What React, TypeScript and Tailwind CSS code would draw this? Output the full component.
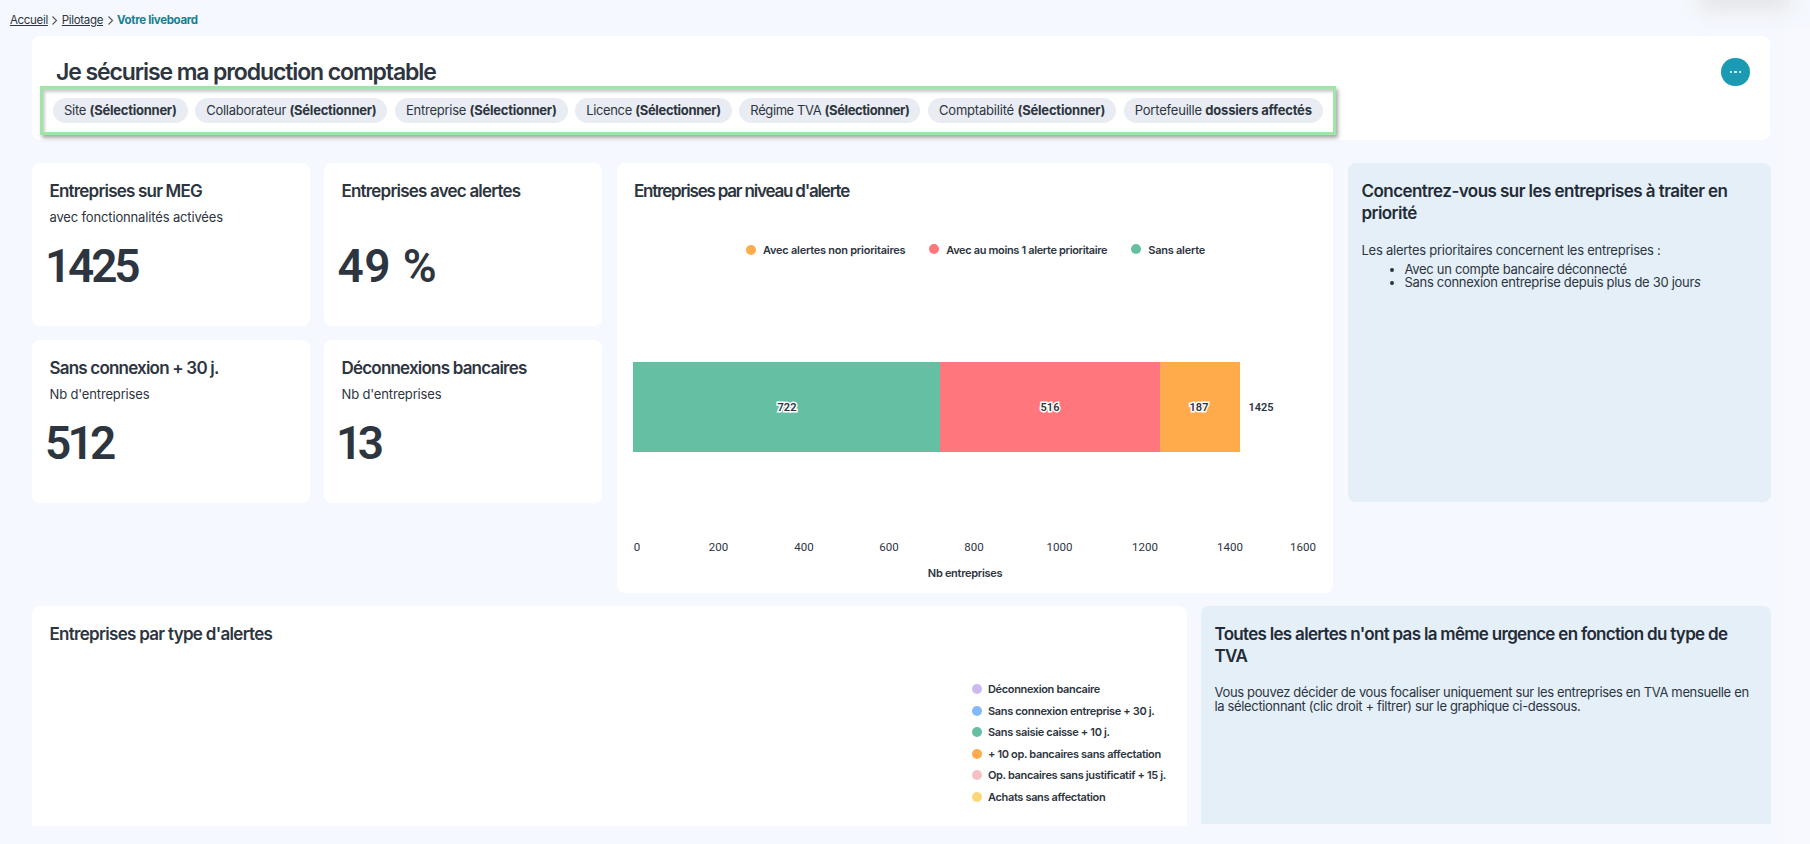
const sans = "font-['Inter','Noto_Sans',sans-serif]";

const chips: [string, string, string][] = [
  ["Site", "(Sélectionner)", "tracking-[-0.25px]"],
  ["Collaborateur", "(Sélectionner)", "tracking-[-0.25px]"],
  ["Entreprise", "(Sélectionner)", "tracking-[-0.25px]"],
  ["Licence", "(Sélectionner)", "tracking-[-0.35px]"],
  ["Régime TVA", "(Sélectionner)", "tracking-[-0.4px]"],
  ["Comptabilité", "(Sélectionner)", "tracking-[-0.2px]"],
  ["Portefeuille", "dossiers affectés", "tracking-[-0.2px]"],
];

function Kpi({ title, sub, value, numClass }: { title: string; sub?: string; value: string; numClass: string }) {
  return (
    <div className="h-[163px] w-[278px] rounded-lg bg-white pl-[17.5px] pt-[16px]">
      <div className="h-[24px] text-[17px] leading-[24px] font-semibold tracking-[-0.8px] text-[#2d3540]">{title}</div>
      <div className="mt-[4px] h-[20px] text-[13px] leading-[20px] tracking-[-0.15px] text-[#2d3540]">{sub}</div>
      <div className={`mt-[11px] font-['Roboto',sans-serif] text-[46px] leading-[56px] font-semibold text-[#2d3540] ${numClass}`}>{value}</div>
    </div>
  );
}

function Dot({ c }: { c: string }) {
  return <span className={`inline-block h-[10px] w-[10px] rounded-full ${c}`} />;
}

const axis: [string, number][] = [
  ["0", 4],
  ["200", 85.5],
  ["400", 171],
  ["600", 256],
  ["800", 341],
  ["1000", 426.5],
  ["1200", 512],
  ["1400", 597],
  ["1600", 670],
];

function BarChart() {
  return (
    <svg width="700" height="335" className="block">
      <rect x="0" y="104" width="307" height="90" fill="#65bfa3" />
      <rect x="307" y="104" width="220" height="90" fill="#ff777d" />
      <rect x="527" y="104" width="80" height="90" fill="#ffab4c" />
      <g className="font-['Roboto',sans-serif] text-[11px] font-semibold" textAnchor="middle" fill="#2d3540">
        {[
          ["722", 154],
          ["516", 417],
          ["187", 566],
        ].map(([t, x]) => (
          <text key={t} x={x} y="153" stroke="#ffffff" strokeWidth="3" className="[paint-order:stroke]">
            {t}
          </text>
        ))}
        <text x="628" y="153">1425</text>
      </g>
      <g className="font-['Roboto',sans-serif] text-[11.5px]" textAnchor="middle" fill="#2d3540">
        {axis.map(([t, x]) => (
          <text key={t} x={x} y="293">
            {t}
          </text>
        ))}
      </g>
      <text x="332" y="319" textAnchor="middle" fill="#2d3540" className="text-[11px] font-semibold tracking-[-0.3px]">
        Nb entreprises
      </text>
    </svg>
  );
}

const legend2: [string, string][] = [
  ["bg-[#cdb9f2]", "Déconnexion bancaire"],
  ["bg-[#85b7fb]", "Sans connexion entreprise + 30 j."],
  ["bg-[#65bfa3]", "Sans saisie caisse + 10 j."],
  ["bg-[#ffab4c]", "+ 10 op. bancaires sans affectation"],
  ["bg-[#f7c1c4]", "Op. bancaires sans justificatif + 15 j."],
  ["bg-[#fdd678]", "Achats sans affectation"],
];

function Chevron() {
  return (
    <span className="text-[#555]">
      <svg width="9" height="16" viewBox="0 0 9 16" fill="none" stroke="currentColor" strokeWidth="1.1">
        <path d="M2.5 4.5 6.5 8.5 2.5 12.5" />
      </svg>
    </span>
  );
}

export default function App() {
  return (
    <div className={`relative h-[844px] w-[1810px] overflow-hidden bg-[#f5f8fe] ${sans} text-[#2d3540]`}>
      <div className="absolute top-[-14px] left-[1700px] h-[24px] w-[90px] bg-[#e4e4e6] blur-[10px]" />
      <div className="absolute top-[29px] left-[1783px] h-[815px] w-[27px] bg-[#f8f9fe]" />

      <div className="relative flex h-[36px] items-start gap-[2.5px] pl-[10px] pt-[12px] text-[11.5px] leading-[16px] tracking-[-0.33px]">
        <span className="underline">Accueil</span>
        <Chevron />
        <span className="underline">Pilotage</span>
        <Chevron />
        <span className="font-bold text-[#13808f]">Votre liveboard</span>
      </div>

      <div className="relative ml-[32px] w-[1739px]">
        <div className="relative h-[104px] w-[1738px] rounded-lg bg-white pl-[8px] pt-[23px]">
          <h1 className="ml-[16px] h-[27px] text-[23px] leading-[27px] font-semibold tracking-[-1.1px] text-[#2d3540]">
            Je sécurise ma production comptable
          </h1>
          <div className="flex h-[49px] w-[1296px] items-center gap-[7.6px] border-[3px] border-[#9ce6a6] pl-[10px] shadow-[2px_3px_4px_rgba(0,0,0,0.35),inset_2px_3px_3px_rgba(0,0,0,0.2)]">
            {chips.map(([a, b, t]) => (
              <span key={a} className={`flex h-[25px] items-center rounded-full bg-[#e9ecf2] px-[11px] text-[13px] whitespace-nowrap text-[#2d3540] ${t}`}>
                {a}&nbsp;<b className="font-bold">{b}</b>
              </span>
            ))}
          </div>
          <button className="absolute top-[22px] right-[20px] flex h-[28px] w-[29px] items-center justify-center gap-[2px] rounded-full bg-[#1a9bb3]">
            <span className="h-[2.5px] w-[2.5px] rounded-full bg-white" />
            <span className="h-[2.5px] w-[2.5px] rounded-full bg-white" />
            <span className="h-[2.5px] w-[2.5px] rounded-full bg-white" />
          </button>
        </div>

        <div className="mt-[23px] flex h-[430px] items-start gap-[15px]">
          <div className="grid w-[570px] grid-cols-[278px_278px] gap-[14px]">
            <Kpi title="Entreprises sur MEG" sub="avec fonctionnalités activées" value="1425" numClass="-ml-[4.5px] tracking-[-3.2px]" />
            <Kpi title="Entreprises avec alertes" value="49 %" numClass="-ml-[4px] tracking-[0.4px]" />
            <Kpi title="Sans connexion + 30 j." sub="Nb d'entreprises" value="512" numClass="-ml-[4.5px] tracking-[-3.8px]" />
            <Kpi title="Déconnexions bancaires" sub="Nb d'entreprises" value="13" numClass="-ml-[5.5px] tracking-[-4.5px]" />
          </div>

          <div className="h-[430px] w-[716px] rounded-lg bg-white pl-[16px] pt-[16px]">
            <div className="ml-[1px] h-[24px] text-[17px] leading-[24px] font-semibold tracking-[-1.2px]">Entreprises par niveau d'alerte</div>
            <div className="mt-[39px] flex h-[16px] items-center pl-[113px] text-[11px] font-semibold tracking-[-0.25px] whitespace-nowrap">
              <Dot c="bg-[#ffab4c]" />
              <span className="ml-[7px]">Avec alertes non prioritaires</span>
              <span className="ml-[24px]"><Dot c="bg-[#ff777d]" /></span>
              <span className="ml-[7px] tracking-[-0.35px]">Avec au moins 1 alerte prioritaire</span>
              <span className="ml-[24px]"><Dot c="bg-[#65bfa3]" /></span>
              <span className="ml-[7px]">Sans alerte</span>
            </div>
            <BarChart />
          </div>

          <div className="h-[339px] w-[423px] rounded-lg bg-[#e4eff8] pr-[14px] pl-[13.5px] pt-[17px]">
            <div className="border-b border-[#e9f0f7] pb-[1px] text-[17px] leading-[22px] font-semibold tracking-[-0.55px] text-[#232b36]">
              Concentrez-vous sur les entreprises à traiter en priorité
            </div>
            <p className="mt-[16px] text-[13px] leading-[16px] tracking-[-0.25px]">Les alertes prioritaires concernent les entreprises :</p>
            <ul className="mt-[5px] ml-[43px] list-disc text-[13px] leading-[13px] tracking-[-0.3px]">
              <li>Avec un compte bancaire déconnecté</li>
              <li>
                Sans connexion entreprise depuis plus de 30 jour<i>s</i>
              </li>
            </ul>
          </div>
        </div>

        <div className="mt-[13px] flex gap-[14px]">
          <div className="flex h-[220px] w-[1155px] justify-end rounded-t-lg bg-white pl-[17.5px] pt-[16px]">
            <div className="flex-1 text-[17px] leading-[24px] font-semibold tracking-[-0.7px]">Entreprises par type d'alertes</div>
            <div className="mt-[59px] flex w-[215px] flex-col gap-[5.6px] text-[11px] leading-[16px] font-semibold tracking-[-0.35px] whitespace-nowrap">
              {legend2.map(([c, t]) => (
                <div key={t} className="flex items-center gap-[6px]">
                  <Dot c={c} />
                  {t}
                </div>
              ))}
            </div>
          </div>
          <div className="h-[218px] w-[570px] rounded-t-lg bg-[#e4eff8] pr-[14px] pl-[13.5px] pt-[17px]">
            <div className="border-b border-[#e9f0f7] pb-[1px] text-[17px] leading-[22px] font-semibold tracking-[-0.7px] text-[#232b36]">
              Toutes les alertes n'ont pas la même urgence en fonction du type de TVA
            </div>
            <p className="mt-[16px] text-[13px] leading-[14px] tracking-[-0.35px]">
              Vous pouvez décider de vous focaliser uniquement sur les entreprises en TVA mensuelle en la sélectionnant (clic droit + filtrer) sur le graphique ci-dessous.
            </p>
          </div>
        </div>
      </div>
    </div>
  );
}
